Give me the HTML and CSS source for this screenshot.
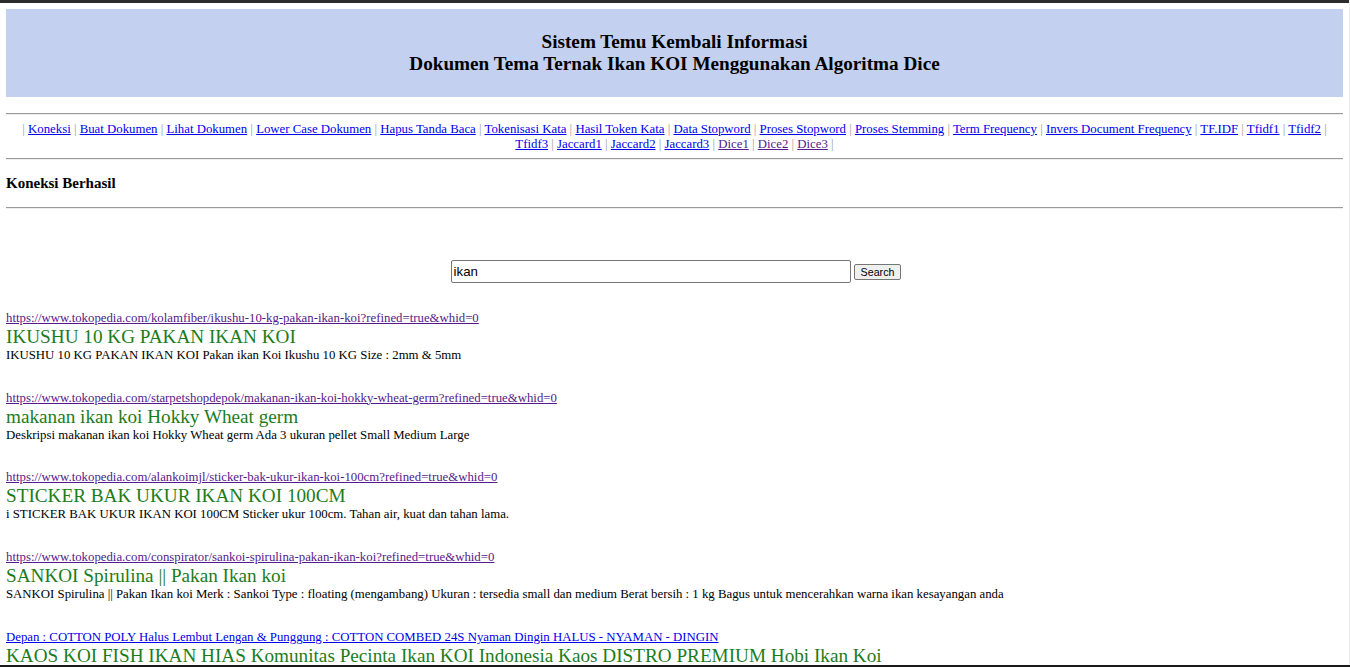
FILE: index.html
```html
<!DOCTYPE html>
<html>
<head>
<meta charset="utf-8">
<title>Sistem Temu Kembali Informasi</title>
<link rel="stylesheet" href="styles.css">
</head>
<body>
<div class="topbar"></div>
<div class="page">
  <div class="banner">
    <h2 class="banner-title">Sistem Temu Kembali Informasi<br>Dokumen Tema Ternak Ikan KOI Menggunakan Algoritma Dice</h2>
  </div>
  <hr class="rule rule-top">
  <div class="nav">
    | <a href="#">Koneksi</a> | <a href="#">Buat Dokumen</a> | <a href="#">Lihat Dokumen</a> | <a href="#">Lower Case Dokumen</a> | <a href="#">Hapus Tanda Baca</a> | <a href="#">Tokenisasi Kata</a> | <a href="#">Hasil Token Kata</a> | <a href="#">Data Stopword</a> | <a href="#">Proses Stopword</a> | <a href="#">Proses Stemming</a> | <a href="#">Term Frequency</a> | <a href="#">Invers Document Frequency</a> | <a href="#">TF.IDF</a> | <a href="#">Tfidf1</a> | <a href="#">Tfidf2</a> | <a href="#">Tfidf3</a> | <a href="#">Jaccard1</a> | <a href="#">Jaccard2</a> | <a href="#">Jaccard3</a> | <a class="visited" href="#">Dice1</a> | <a class="visited" href="#">Dice2</a> | <a class="visited" href="#">Dice3</a> |
  </div>
  <hr class="rule rule-nav">
  <h3 class="status">Koneksi Berhasil</h3>
  <hr class="rule">
  <form class="search" onsubmit="return false;">
    <input class="search-input" type="text" value="ikan">
    <button class="search-btn" type="submit">Search</button>
  </form>
  <div class="results">
    <div class="result">
      <a class="result-url visited" href="#">https://www.tokopedia.com/kolamfiber/ikushu-10-kg-pakan-ikan-koi?refined=true&amp;whid=0</a>
      <div class="result-title">IKUSHU 10 KG PAKAN IKAN KOI</div>
      <div class="result-desc">IKUSHU 10 KG PAKAN IKAN KOI Pakan ikan Koi Ikushu 10 KG Size : 2mm &amp; 5mm</div>
    </div>
    <div class="result">
      <a class="result-url visited" href="#">https://www.tokopedia.com/starpetshopdepok/makanan-ikan-koi-hokky-wheat-germ?refined=true&amp;whid=0</a>
      <div class="result-title">makanan ikan koi Hokky Wheat germ</div>
      <div class="result-desc">Deskripsi makanan ikan koi Hokky Wheat germ Ada 3 ukuran pellet Small Medium Large</div>
    </div>
    <div class="result">
      <a class="result-url visited" href="#">https://www.tokopedia.com/alankoimjl/sticker-bak-ukur-ikan-koi-100cm?refined=true&amp;whid=0</a>
      <div class="result-title">STICKER BAK UKUR IKAN KOI 100CM</div>
      <div class="result-desc">i STICKER BAK UKUR IKAN KOI 100CM Sticker ukur 100cm. Tahan air, kuat dan tahan lama.</div>
    </div>
    <div class="result">
      <a class="result-url visited" href="#">https://www.tokopedia.com/conspirator/sankoi-spirulina-pakan-ikan-koi?refined=true&amp;whid=0</a>
      <div class="result-title">SANKOI Spirulina || Pakan Ikan koi</div>
      <div class="result-desc">SANKOI Spirulina || Pakan Ikan koi Merk : Sankoi Type : floating (mengambang) Ukuran : tersedia small dan medium Berat bersih : 1 kg Bagus untuk mencerahkan warna ikan kesayangan anda</div>
    </div>
    <div class="result">
      <a class="result-url" href="#">Depan : COTTON POLY Halus Lembut Lengan &amp; Punggung : COTTON COMBED 24S Nyaman Dingin HALUS - NYAMAN - DINGIN</a>
      <div class="result-title">KAOS KOI FISH IKAN HIAS Komunitas Pecinta Ikan KOI Indonesia Kaos DISTRO PREMIUM Hobi Ikan Koi</div>
      <div class="result-desc">KAOS KOI FISH IKAN HIAS Komunitas Pecinta Ikan KOI Indonesia Kaos DISTRO PREMIUM Hobi Ikan Koi</div>
    </div>
  </div>
</div>
<div class="bottombar"></div>
</body>
</html>
```

FILE: styles.css
```css
html {
  background: #fff;
}
body {
  margin: 0;
  font-family: "Liberation Serif", "Times New Roman", serif;
  font-size: 12.8px;
  color: #000;
  overflow: hidden;
  border-right: 1px solid #efefef;
}
.topbar {
  height: 3px;
  background: #2c2c2c;
}
.page {
  padding: 6px 6px 0 6px;
}
.banner {
  background: #c4d0ef;
  padding: 22px 0;
}
.banner-title {
  margin: 0;
  text-align: center;
  font-size: 19.2px;
  font-weight: bold;
  line-height: 22px;
}
.rule {
  border: 0;
  border-top: 1px solid #9a9a9a;
  border-bottom: 1px solid #eeeeee;
  height: 0;
  margin: 6.4px 0;
}
.rule-top {
  margin-top: 16px;
}
.rule-nav {
  margin-top: 5.4px;
}
.nav {
  text-align: center;
  color: #9a9a9a;
  line-height: 15px;
  padding-top: 1px;
}
.nav a {
  color: #0000ee;
}
.nav a.visited {
  color: #551a8b;
}
.status {
  margin: 15px 0;
  font-size: 15px;
  line-height: 17px;
}
.search {
  display: flex;
  justify-content: center;
  align-items: flex-start;
  gap: 3px;
  margin: 51px 0 28px;
  padding-left: 3px;
}
.search-input {
  width: 400px;
  height: 23px;
  box-sizing: border-box;
  border: 1px solid #767676;
  border-radius: 2px;
  padding: 0 2px;
  font-family: "Liberation Sans", Arial, sans-serif;
  font-size: 13.3px;
  color: #000;
}
.search-btn {
  height: 16px;
  box-sizing: border-box;
  padding: 0 6px;
  border: 1px solid #767676;
  border-radius: 2px;
  background: #efefef;
  font-family: "Liberation Sans", Arial, sans-serif;
  font-size: 10.7px;
  line-height: 14px;
  color: #000;
  margin-top: 4px;
}
.results {
  display: flex;
  flex-direction: column;
  gap: 27.75px;
}
.result-url {
  display: block;
  color: #0000ee;
  font-size: 12.8px;
  line-height: 15px;
}
.result-url.visited {
  color: #551a8b;
}
.result-title {
  color: #1c7c1c;
  font-size: 19.2px;
  line-height: 22px;
}
.result-desc {
  font-size: 12.8px;
  line-height: 15px;
}
.bottombar {
  position: fixed;
  left: 0;
  right: 0;
  bottom: 0;
  height: 2px;
  background: #1a1a1a;
}
```
